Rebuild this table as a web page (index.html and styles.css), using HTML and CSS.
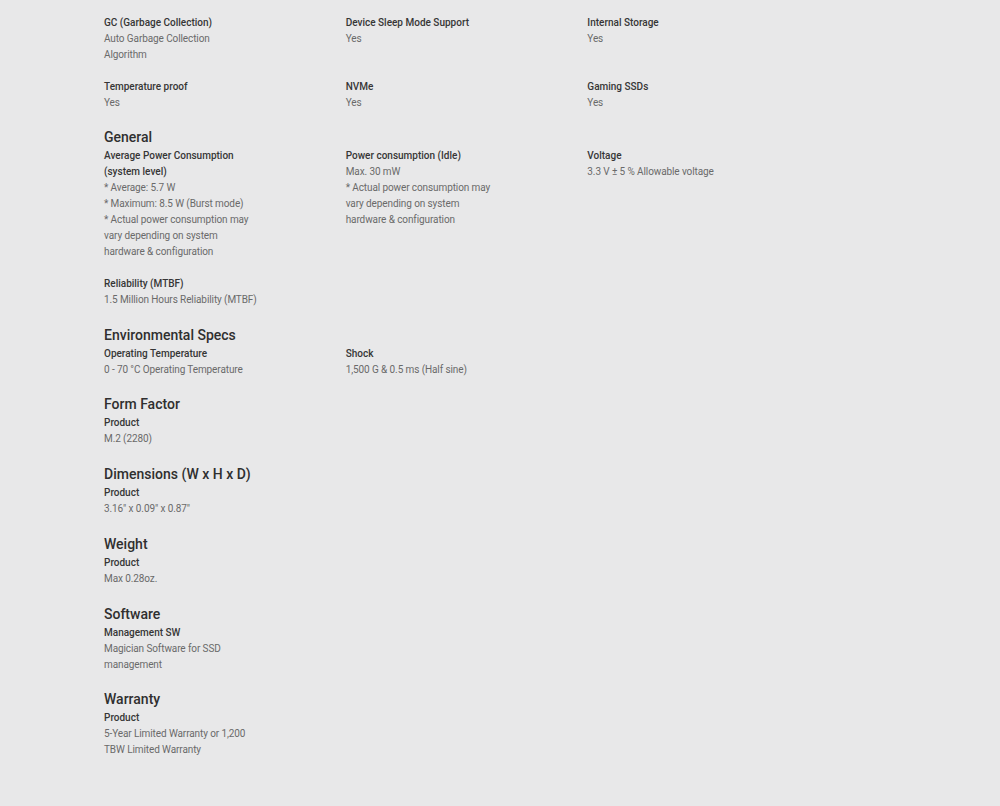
FILE: index.html
```html
<!DOCTYPE html>
<html lang="en">
<head>
<meta charset="utf-8">
<title>Specs</title>
<link rel="stylesheet" href="styles.css">
</head>
<body>
<main class="specs">
  <section class="spec-section spec-section--intro">
    <div class="spec-grid">
      <div class="spec-item">
        <div class="spec-label">GC (Garbage Collection)</div>
        <div class="spec-value">Auto Garbage Collection<br>Algorithm</div>
      </div>
      <div class="spec-item">
        <div class="spec-label">Device Sleep Mode Support</div>
        <div class="spec-value">Yes</div>
      </div>
      <div class="spec-item">
        <div class="spec-label">Internal Storage</div>
        <div class="spec-value">Yes</div>
      </div>
      <div class="spec-item">
        <div class="spec-label">Temperature proof</div>
        <div class="spec-value">Yes</div>
      </div>
      <div class="spec-item">
        <div class="spec-label">NVMe</div>
        <div class="spec-value">Yes</div>
      </div>
      <div class="spec-item">
        <div class="spec-label">Gaming SSDs</div>
        <div class="spec-value">Yes</div>
      </div>
    </div>
  </section>

  <section class="spec-section">
    <h2 class="spec-heading">General</h2>
    <div class="spec-grid">
      <div class="spec-item">
        <div class="spec-label">Average Power Consumption (system level)</div>
        <div class="spec-value">* Average: 5.7 W<br>* Maximum: 8.5 W (Burst mode)<br>* Actual power consumption may vary depending on system hardware &amp; configuration</div>
      </div>
      <div class="spec-item">
        <div class="spec-label">Power consumption (Idle)</div>
        <div class="spec-value">Max. 30 mW<br>* Actual power consumption may vary depending on system hardware &amp; configuration</div>
      </div>
      <div class="spec-item">
        <div class="spec-label">Voltage</div>
        <div class="spec-value">3.3 V ± 5 % Allowable voltage</div>
      </div>
      <div class="spec-item">
        <div class="spec-label">Reliability (MTBF)</div>
        <div class="spec-value">1.5 Million Hours Reliability (MTBF)</div>
      </div>
    </div>
  </section>

  <section class="spec-section">
    <h2 class="spec-heading">Environmental Specs</h2>
    <div class="spec-grid">
      <div class="spec-item">
        <div class="spec-label">Operating Temperature</div>
        <div class="spec-value">0 - 70 °C Operating Temperature</div>
      </div>
      <div class="spec-item">
        <div class="spec-label">Shock</div>
        <div class="spec-value">1,500 G &amp; 0.5 ms (Half sine)</div>
      </div>
    </div>
  </section>

  <section class="spec-section">
    <h2 class="spec-heading">Form Factor</h2>
    <div class="spec-grid">
      <div class="spec-item">
        <div class="spec-label">Product</div>
        <div class="spec-value">M.2 (2280)</div>
      </div>
    </div>
  </section>

  <section class="spec-section">
    <h2 class="spec-heading">Dimensions (W x H x D)</h2>
    <div class="spec-grid">
      <div class="spec-item">
        <div class="spec-label">Product</div>
        <div class="spec-value">3.16" x 0.09" x 0.87"</div>
      </div>
    </div>
  </section>

  <section class="spec-section">
    <h2 class="spec-heading">Weight</h2>
    <div class="spec-grid">
      <div class="spec-item">
        <div class="spec-label">Product</div>
        <div class="spec-value">Max 0.28oz.</div>
      </div>
    </div>
  </section>

  <section class="spec-section">
    <h2 class="spec-heading">Software</h2>
    <div class="spec-grid">
      <div class="spec-item">
        <div class="spec-label">Management SW</div>
        <div class="spec-value">Magician Software for SSD management</div>
      </div>
    </div>
  </section>

  <section class="spec-section">
    <h2 class="spec-heading">Warranty</h2>
    <div class="spec-grid">
      <div class="spec-item">
        <div class="spec-label">Product</div>
        <div class="spec-value">5-Year Limited Warranty or 1,200 TBW Limited Warranty</div>
      </div>
    </div>
  </section>
</main>
</body>
</html>
```

FILE: styles.css
```css
html, body {
  margin: 0;
  padding: 0;
  background: #e8e8e9;
}

body {
  font-family: Roboto, "Liberation Sans", Arial, sans-serif;
  color: #333;
  min-height: 806px;
}

.specs {
  padding: 15px 0 40px 104px;
  width: 725px;
}

.spec-section {
  margin-bottom: 16.75px;
}

.spec-section--intro {
  margin-bottom: 15.75px;
}

.spec-heading {
  margin: 0;
  padding-bottom: 1px;
  font-size: 14px;
  line-height: 20px;
  font-weight: 500;
  color: #2f2f2f;
}

.spec-grid {
  display: grid;
  grid-template-columns: repeat(3, 1fr);
  row-gap: 16px;
}

.spec-item {
  max-width: 155px;
}

.spec-label {
  font-size: 10px;
  line-height: 16px;
  font-weight: 500;
  color: #363636;
}

.spec-value {
  font-size: 10px;
  line-height: 16px;
  letter-spacing: -0.1px;
  color: #6a6a6a;
}
```
